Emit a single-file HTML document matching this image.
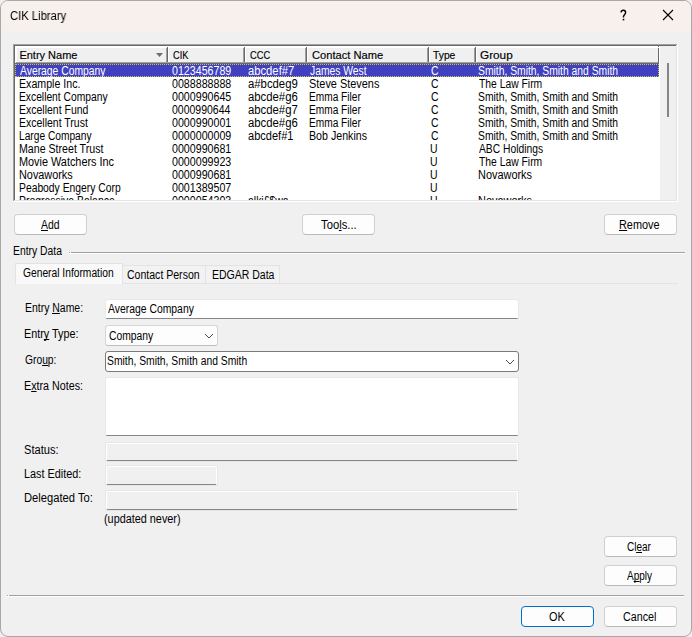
<!DOCTYPE html>
<html><head><meta charset="utf-8"><style>
*{margin:0;padding:0;box-sizing:border-box}
html,body{width:692px;height:637px;overflow:hidden;background:#f0f0f0}
body{position:relative;font-family:"Liberation Sans",sans-serif;color:#000}
.a{position:absolute}
.tx{white-space:nowrap;line-height:14px;transform-origin:0 0}
.btn{position:absolute;background:#fdfdfd;border:1px solid #d0d0d0;border-bottom-color:#b9b9b9;border-radius:4px}
u{text-decoration:none;background:linear-gradient(#000,#000) 0 12px/100% 1px no-repeat}
</style></head><body>
<div class="a" style="left:0;top:0;width:692px;height:637px;border:1px solid #a8a8a8;border-radius:8px;background:#f0f0f0;overflow:hidden">
<div class="a" style="left:0;top:0;width:690px;height:30px;background:#f8f0ed"></div>
</div>
<svg class="a" style="left:0;top:0" width="692" height="30"><path d="M621 12.4C621.2 10.9 622.4 10.3 623.4 10.3C624.7 10.3 625.6 11.2 625.6 12.6C625.6 14.5 623.5 14.8 623.5 16.6L623.5 17.4" stroke="#000" stroke-width="1.4" fill="none"/><rect x="622.7" y="18.8" width="1.6" height="1.6" fill="#000"/><path d="M663 10L673 20M673 10L663 20" stroke="#000" stroke-width="1.1" fill="none"/></svg>
<div class="a" style="left:14px;top:45px;width:663px;height:156px;background:#fff"></div>
<div class="a" style="left:13px;top:44px;width:664px;height:1px;background:#a0a0a0"></div>
<div class="a" style="left:13px;top:44px;width:1px;height:157px;background:#a0a0a0"></div>
<div class="a" style="left:677px;top:44px;width:1px;height:158px;background:#fff"></div>
<div class="a" style="left:13px;top:201px;width:665px;height:1px;background:#fff"></div>
<div class="a" style="left:14px;top:45px;width:662px;height:1px;background:#696969"></div>
<div class="a" style="left:14px;top:45px;width:1px;height:155px;background:#696969"></div>
<div class="a" style="left:676px;top:45px;width:1px;height:156px;background:#e3e3e3"></div>
<div class="a" style="left:14px;top:200px;width:663px;height:1px;background:#e3e3e3"></div>
<div class="a" style="left:660px;top:46px;width:16px;height:154px;background:#f0f0f0"></div>
<div class="a" style="left:667px;top:63px;width:2px;height:54px;background:#858585"></div>
<div class="a" style="left:16px;top:47px;width:643px;height:17px;background:#f0f0f0"></div>
<div class="a" style="left:16px;top:47px;width:151px;height:1px;background:#fff"></div>
<div class="a" style="left:16px;top:47px;width:1px;height:16px;background:#fff"></div>
<div class="a" style="left:166px;top:48px;width:1px;height:15px;background:#a0a0a0"></div>
<div class="a" style="left:167px;top:47px;width:1px;height:17px;background:#696969"></div>
<div class="a" style="left:168px;top:47px;width:76px;height:1px;background:#fff"></div>
<div class="a" style="left:168px;top:47px;width:1px;height:16px;background:#fff"></div>
<div class="a" style="left:243px;top:48px;width:1px;height:15px;background:#a0a0a0"></div>
<div class="a" style="left:244px;top:47px;width:1px;height:17px;background:#696969"></div>
<div class="a" style="left:245px;top:47px;width:61px;height:1px;background:#fff"></div>
<div class="a" style="left:245px;top:47px;width:1px;height:16px;background:#fff"></div>
<div class="a" style="left:305px;top:48px;width:1px;height:15px;background:#a0a0a0"></div>
<div class="a" style="left:306px;top:47px;width:1px;height:17px;background:#696969"></div>
<div class="a" style="left:307px;top:47px;width:121px;height:1px;background:#fff"></div>
<div class="a" style="left:307px;top:47px;width:1px;height:16px;background:#fff"></div>
<div class="a" style="left:427px;top:48px;width:1px;height:15px;background:#a0a0a0"></div>
<div class="a" style="left:428px;top:47px;width:1px;height:17px;background:#696969"></div>
<div class="a" style="left:429px;top:47px;width:46px;height:1px;background:#fff"></div>
<div class="a" style="left:429px;top:47px;width:1px;height:16px;background:#fff"></div>
<div class="a" style="left:474px;top:48px;width:1px;height:15px;background:#a0a0a0"></div>
<div class="a" style="left:475px;top:47px;width:1px;height:17px;background:#696969"></div>
<div class="a" style="left:476px;top:47px;width:182px;height:1px;background:#fff"></div>
<div class="a" style="left:476px;top:47px;width:1px;height:16px;background:#fff"></div>
<div class="a" style="left:658px;top:46px;width:1px;height:1px;background:#707070"></div><div class="a" style="left:658px;top:48px;width:1px;height:16px;background:#696969"></div>
<div class="a" style="left:16px;top:62px;width:642px;height:1px;background:#a0a0a0"></div>
<div class="a" style="left:15px;top:63px;width:644px;height:1px;background:#696969"></div>
<div class="a tx" style="left:19.40px;top:48px;font-size:11px;transform:scaleX(1.0000);color:#000;-webkit-text-stroke:0.15px #000;">Entry Name</div>
<div class="a tx" style="left:172.80px;top:48px;font-size:11px;transform:scaleX(0.8389);color:#000;-webkit-text-stroke:0.15px #000;">CIK</div>
<div class="a tx" style="left:249.60px;top:48px;font-size:11px;transform:scaleX(0.8458);color:#000;-webkit-text-stroke:0.15px #000;">CCC</div>
<div class="a tx" style="left:311.50px;top:48px;font-size:11px;transform:scaleX(1.0114);color:#000;-webkit-text-stroke:0.15px #000;">Contact Name</div>
<div class="a tx" style="left:433.00px;top:48px;font-size:11px;transform:scaleX(0.9375);color:#000;-webkit-text-stroke:0.15px #000;">Type</div>
<div class="a tx" style="left:480.40px;top:48px;font-size:11px;transform:scaleX(1.0700);color:#000;-webkit-text-stroke:0.15px #000;">Group</div>
<svg class="a" style="left:155px;top:52px" width="9" height="6"><path d="M1 1H8L4.5 5Z" fill="#6d6d6d"/></svg>
<div class="a" style="left:15px;top:64px;width:644px;height:13px;background:#4040c0"></div>
<div class="a" style="left:15px;top:64px;width:644px;height:13px;border:1px dotted #c8c83c"></div>
<div class="a" style="left:0;top:64px;width:659px;height:136px;overflow:hidden">
<div class="a" style="left:0;top:-64px;width:692px;height:637px">
<div class="a tx" style="left:19.80px;top:64px;font-size:12px;transform:scaleX(0.8616);color:#fff;">Average Company</div>
<div class="a tx" style="left:171.80px;top:64px;font-size:12px;transform:scaleX(0.8879);color:#fff;">0123456789</div>
<div class="a tx" style="left:247.60px;top:64px;font-size:12px;transform:scaleX(0.9367);color:#fff;">abcdef#7</div>
<div class="a tx" style="left:310.30px;top:64px;font-size:12px;transform:scaleX(0.8606);color:#fff;">James West</div>
<div class="a tx" style="left:431.00px;top:64px;font-size:12px;transform:scaleX(0.8700);color:#fff;">C</div>
<div class="a tx" style="left:478.34px;top:64px;font-size:12px;transform:scaleX(0.8609);color:#fff;">Smith, Smith, Smith and Smith</div>
<div class="a tx" style="left:18.91px;top:77px;font-size:12px;transform:scaleX(0.8866);color:#000;">Example Inc.</div>
<div class="a tx" style="left:171.80px;top:77px;font-size:12px;transform:scaleX(0.8879);color:#000;">0088888888</div>
<div class="a tx" style="left:247.60px;top:77px;font-size:12px;transform:scaleX(0.9442);color:#000;">a#bcdeg9</div>
<div class="a tx" style="left:309.39px;top:77px;font-size:12px;transform:scaleX(0.9092);color:#000;">Steve Stevens</div>
<div class="a tx" style="left:431.00px;top:77px;font-size:12px;transform:scaleX(0.8700);color:#000;">C</div>
<div class="a tx" style="left:479.20px;top:77px;font-size:12px;transform:scaleX(0.8616);color:#000;">The Law Firm</div>
<div class="a tx" style="left:18.94px;top:90px;font-size:12px;transform:scaleX(0.8563);color:#000;">Excellent Company</div>
<div class="a tx" style="left:171.80px;top:90px;font-size:12px;transform:scaleX(0.8879);color:#000;">0000990645</div>
<div class="a tx" style="left:247.60px;top:90px;font-size:12px;transform:scaleX(0.9442);color:#000;">abcde#g6</div>
<div class="a tx" style="left:309.45px;top:90px;font-size:12px;transform:scaleX(0.8450);color:#000;">Emma Filer</div>
<div class="a tx" style="left:431.00px;top:90px;font-size:12px;transform:scaleX(0.8700);color:#000;">C</div>
<div class="a tx" style="left:478.34px;top:90px;font-size:12px;transform:scaleX(0.8609);color:#000;">Smith, Smith, Smith and Smith</div>
<div class="a tx" style="left:18.93px;top:103px;font-size:12px;transform:scaleX(0.8744);color:#000;">Excellent Fund</div>
<div class="a tx" style="left:171.80px;top:103px;font-size:12px;transform:scaleX(0.8746);color:#000;">0000990644</div>
<div class="a tx" style="left:247.60px;top:103px;font-size:12px;transform:scaleX(0.9442);color:#000;">abcde#g7</div>
<div class="a tx" style="left:309.45px;top:103px;font-size:12px;transform:scaleX(0.8450);color:#000;">Emma Filer</div>
<div class="a tx" style="left:431.00px;top:103px;font-size:12px;transform:scaleX(0.8700);color:#000;">C</div>
<div class="a tx" style="left:478.34px;top:103px;font-size:12px;transform:scaleX(0.8609);color:#000;">Smith, Smith, Smith and Smith</div>
<div class="a tx" style="left:18.93px;top:116px;font-size:12px;transform:scaleX(0.8744);color:#000;">Excellent Trust</div>
<div class="a tx" style="left:171.80px;top:116px;font-size:12px;transform:scaleX(0.8879);color:#000;">0000990001</div>
<div class="a tx" style="left:247.60px;top:116px;font-size:12px;transform:scaleX(0.9442);color:#000;">abcde#g6</div>
<div class="a tx" style="left:309.45px;top:116px;font-size:12px;transform:scaleX(0.8450);color:#000;">Emma Filer</div>
<div class="a tx" style="left:431.00px;top:116px;font-size:12px;transform:scaleX(0.8700);color:#000;">C</div>
<div class="a tx" style="left:478.34px;top:116px;font-size:12px;transform:scaleX(0.8609);color:#000;">Smith, Smith, Smith and Smith</div>
<div class="a tx" style="left:18.95px;top:129px;font-size:12px;transform:scaleX(0.8494);color:#000;">Large Company</div>
<div class="a tx" style="left:171.80px;top:129px;font-size:12px;transform:scaleX(0.8879);color:#000;">0000000009</div>
<div class="a tx" style="left:247.60px;top:129px;font-size:12px;transform:scaleX(0.9204);color:#000;">abcdef#1</div>
<div class="a tx" style="left:309.41px;top:129px;font-size:12px;transform:scaleX(0.8875);color:#000;">Bob Jenkins</div>
<div class="a tx" style="left:431.00px;top:129px;font-size:12px;transform:scaleX(0.8700);color:#000;">C</div>
<div class="a tx" style="left:478.34px;top:129px;font-size:12px;transform:scaleX(0.8609);color:#000;">Smith, Smith, Smith and Smith</div>
<div class="a tx" style="left:18.91px;top:142px;font-size:12px;transform:scaleX(0.8851);color:#000;">Mane Street Trust</div>
<div class="a tx" style="left:171.80px;top:142px;font-size:12px;transform:scaleX(0.8879);color:#000;">0000990681</div>
<div class="a tx" style="left:430.13px;top:142px;font-size:12px;transform:scaleX(0.8700);color:#000;">U</div>
<div class="a tx" style="left:479.20px;top:142px;font-size:12px;transform:scaleX(0.8573);color:#000;">ABC Holdings</div>
<div class="a tx" style="left:18.89px;top:155px;font-size:12px;transform:scaleX(0.9058);color:#000;">Movie Watchers Inc</div>
<div class="a tx" style="left:171.80px;top:155px;font-size:12px;transform:scaleX(0.8879);color:#000;">0000099923</div>
<div class="a tx" style="left:430.13px;top:155px;font-size:12px;transform:scaleX(0.8700);color:#000;">U</div>
<div class="a tx" style="left:479.20px;top:155px;font-size:12px;transform:scaleX(0.8616);color:#000;">The Law Firm</div>
<div class="a tx" style="left:18.89px;top:168px;font-size:12px;transform:scaleX(0.9052);color:#000;">Novaworks</div>
<div class="a tx" style="left:171.80px;top:168px;font-size:12px;transform:scaleX(0.8879);color:#000;">0000990681</div>
<div class="a tx" style="left:430.13px;top:168px;font-size:12px;transform:scaleX(0.8700);color:#000;">U</div>
<div class="a tx" style="left:478.29px;top:168px;font-size:12px;transform:scaleX(0.9103);color:#000;">Novaworks</div>
<div class="a tx" style="left:18.94px;top:181px;font-size:12px;transform:scaleX(0.8607);color:#000;">Peabody Engery Corp</div>
<div class="a tx" style="left:171.80px;top:181px;font-size:12px;transform:scaleX(0.8879);color:#000;">0001389507</div>
<div class="a tx" style="left:430.13px;top:181px;font-size:12px;transform:scaleX(0.8700);color:#000;">U</div>
<div class="a tx" style="left:18.93px;top:194px;font-size:12px;transform:scaleX(0.8700);color:#000;">Progressive Balance</div>
<div class="a tx" style="left:171.80px;top:194px;font-size:12px;transform:scaleX(0.8879);color:#000;">0000054303</div>
<div class="a tx" style="left:247.60px;top:194px;font-size:12px;transform:scaleX(0.8700);color:#000;">alkj£$wa</div>
<div class="a tx" style="left:430.13px;top:194px;font-size:12px;transform:scaleX(0.8700);color:#000;">U</div>
<div class="a tx" style="left:478.29px;top:194px;font-size:12px;transform:scaleX(0.9103);color:#000;">Novaworks</div>
</div></div>
<div class="btn" style="left:14px;top:214px;width:73px;height:21px;"></div><div class="a tx" style="left:41.00px;top:218px;font-size:12px;transform:scaleX(0.8667);color:#000;"><u>A</u>dd</div>
<div class="btn" style="left:302px;top:214px;width:73px;height:21px;"></div><div class="a tx" style="left:321.00px;top:218px;font-size:12px;transform:scaleX(0.9378);color:#000;">Too<u>l</u>s...</div>
<div class="btn" style="left:604px;top:214px;width:73px;height:21px;"></div><div class="a tx" style="left:619.09px;top:218px;font-size:12px;transform:scaleX(0.9070);color:#000;"><u>R</u>emove</div>
<div class="a tx" style="left:12.84px;top:244px;font-size:12px;transform:scaleX(0.8625);color:#000;">Entry Data</div>
<div class="a" style="left:69px;top:252px;width:616px;height:1px;background:#a0a0a0"></div>
<div class="a" style="left:70px;top:252px;width:1px;height:1px;background:#fff"></div>
<div class="a" style="left:69px;top:253px;width:616px;height:1px;background:#fff"></div>
<div class="a" style="left:15px;top:283px;width:663px;height:1px;background:#e3e3e3"></div>
<div class="a" style="left:122px;top:265px;width:84px;height:18px;background:#f2f2f2;border:1px solid #e3e3e3;border-bottom:none"></div>
<div class="a" style="left:205px;top:265px;width:75px;height:18px;background:#f2f2f2;border:1px solid #e3e3e3;border-bottom:none"></div>
<div class="a" style="left:15px;top:263px;width:108px;height:21px;background:#f9f9f9;border:1px solid #e3e3e3;border-bottom:none"></div>
<div class="a tx" style="left:23.00px;top:266px;font-size:12px;transform:scaleX(0.8547);color:#000;">General Information</div>
<div class="a tx" style="left:127.00px;top:268px;font-size:12px;transform:scaleX(0.8780);color:#000;">Contact Person</div>
<div class="a tx" style="left:211.63px;top:268px;font-size:12px;transform:scaleX(0.8746);color:#000;">EDGAR Data</div>
<div class="a tx" style="left:24.73px;top:301px;font-size:12px;transform:scaleX(0.8708);color:#000;">Entry <u>N</u>ame:</div>
<div class="a tx" style="left:24.30px;top:327px;font-size:12px;transform:scaleX(0.9017);color:#000;">Entr<u>y</u> Type:</div>
<div class="a tx" style="left:25.20px;top:353px;font-size:12px;transform:scaleX(0.8556);color:#000;">Gro<u>u</u>p:</div>
<div class="a tx" style="left:24.31px;top:379px;font-size:12px;transform:scaleX(0.8938);color:#000;">E<u>x</u>tra Notes:</div>
<div class="a tx" style="left:24.27px;top:443px;font-size:12px;transform:scaleX(0.9257);color:#000;">Status:</div>
<div class="a tx" style="left:24.30px;top:467px;font-size:12px;transform:scaleX(0.9033);color:#000;">Last Edited:</div>
<div class="a tx" style="left:24.27px;top:491px;font-size:12px;transform:scaleX(0.9319);color:#000;">Delegated To:</div>
<div class="a" style="left:105px;top:299px;width:414px;height:20px;border:1px solid #e8e8e8;border-bottom:none;border-radius:3px 3px 0 0"></div><div class="a" style="left:106px;top:300px;width:412px;height:19px;background:#fff;border-bottom:1px solid #868686;border-radius:2px 2px 1px 1px"></div>
<div class="a tx" style="left:108.00px;top:302px;font-size:12px;transform:scaleX(0.8657);color:#000;">Average Company</div>
<div class="a" style="left:105px;top:325px;width:113px;height:21px;background:#fdfdfd;border:1px solid #d5d5d5;border-bottom-color:#bdbdbd;border-radius:3px"></div>
<div class="a tx" style="left:108.60px;top:329px;font-size:12px;transform:scaleX(0.8608);color:#000;">Company</div>
<div class="a" style="left:105px;top:351px;width:414px;height:21px;background:#fff;border:1px solid #7a7a7a;border-radius:3px"></div>
<div class="a tx" style="left:107.14px;top:354px;font-size:12px;transform:scaleX(0.8615);color:#000;">Smith, Smith, Smith and Smith</div>
<svg class="a" style="left:0;top:0" width="692" height="637"><path d="M205 334L209 338L213 334" stroke="#4a4a4a" stroke-width="1" fill="none"/><path d="M506 360L510 364L514 360" stroke="#4a4a4a" stroke-width="1" fill="none"/></svg>
<div class="a" style="left:105px;top:377px;width:414px;height:59px;border:1px solid #e8e8e8;border-bottom:none;border-radius:3px 3px 0 0"></div><div class="a" style="left:106px;top:378px;width:412px;height:58px;background:#fff;border-bottom:1px solid #868686;border-radius:2px 2px 1px 1px"></div>
<div class="a" style="left:105px;top:442px;width:414px;height:20px;border:1px solid #e6e6e6;border-radius:2px"></div><div class="a" style="left:106px;top:443px;width:412px;height:18px;background:#f0f0f0;border:1px solid #fff;border-bottom:1px solid #868686;border-radius:2px"></div>
<div class="a" style="left:105px;top:465px;width:113px;height:21px;border:1px solid #e6e6e6;border-radius:2px"></div><div class="a" style="left:106px;top:466px;width:111px;height:19px;background:#f0f0f0;border:1px solid #fff;border-bottom:1px solid #868686;border-radius:2px"></div>
<div class="a" style="left:105px;top:490px;width:414px;height:21px;border:1px solid #e6e6e6;border-radius:2px"></div><div class="a" style="left:106px;top:491px;width:412px;height:19px;background:#f0f0f0;border:1px solid #fff;border-bottom:1px solid #868686;border-radius:2px"></div>
<div class="a tx" style="left:104.10px;top:512px;font-size:12px;transform:scaleX(0.9036);color:#000;">(updated never)</div>
<div class="btn" style="left:604px;top:536px;width:73px;height:21px;"></div><div class="a tx" style="left:627.40px;top:540px;font-size:12px;transform:scaleX(0.8310);color:#000;">Cl<u>e</u>ar</div>
<div class="btn" style="left:604px;top:565px;width:73px;height:21px;"></div><div class="a tx" style="left:627.40px;top:569px;font-size:12px;transform:scaleX(0.8333);color:#000;">A<u>p</u>ply</div>
<div class="a" style="left:7px;top:595px;width:677px;height:1px;background:#a0a0a0"></div>
<div class="a" style="left:8px;top:595px;width:1px;height:1px;background:#fff"></div>
<div class="a" style="left:7px;top:596px;width:677px;height:1px;background:#fff"></div>
<div class="btn" style="left:521px;top:606px;width:73px;height:21px;border:1px solid #0070cc;"></div><div class="a tx" style="left:549.40px;top:610px;font-size:12px;transform:scaleX(0.9059);color:#000;">OK</div>
<div class="btn" style="left:604px;top:606px;width:73px;height:21px;"></div><div class="a tx" style="left:623.30px;top:610px;font-size:12px;transform:scaleX(0.8919);color:#000;">Cancel</div>
<div class="a tx" style="left:10.00px;top:9px;font-size:12px;transform:scaleX(0.9367);color:#000;will-change:transform;">CIK Library</div>
</body></html>
